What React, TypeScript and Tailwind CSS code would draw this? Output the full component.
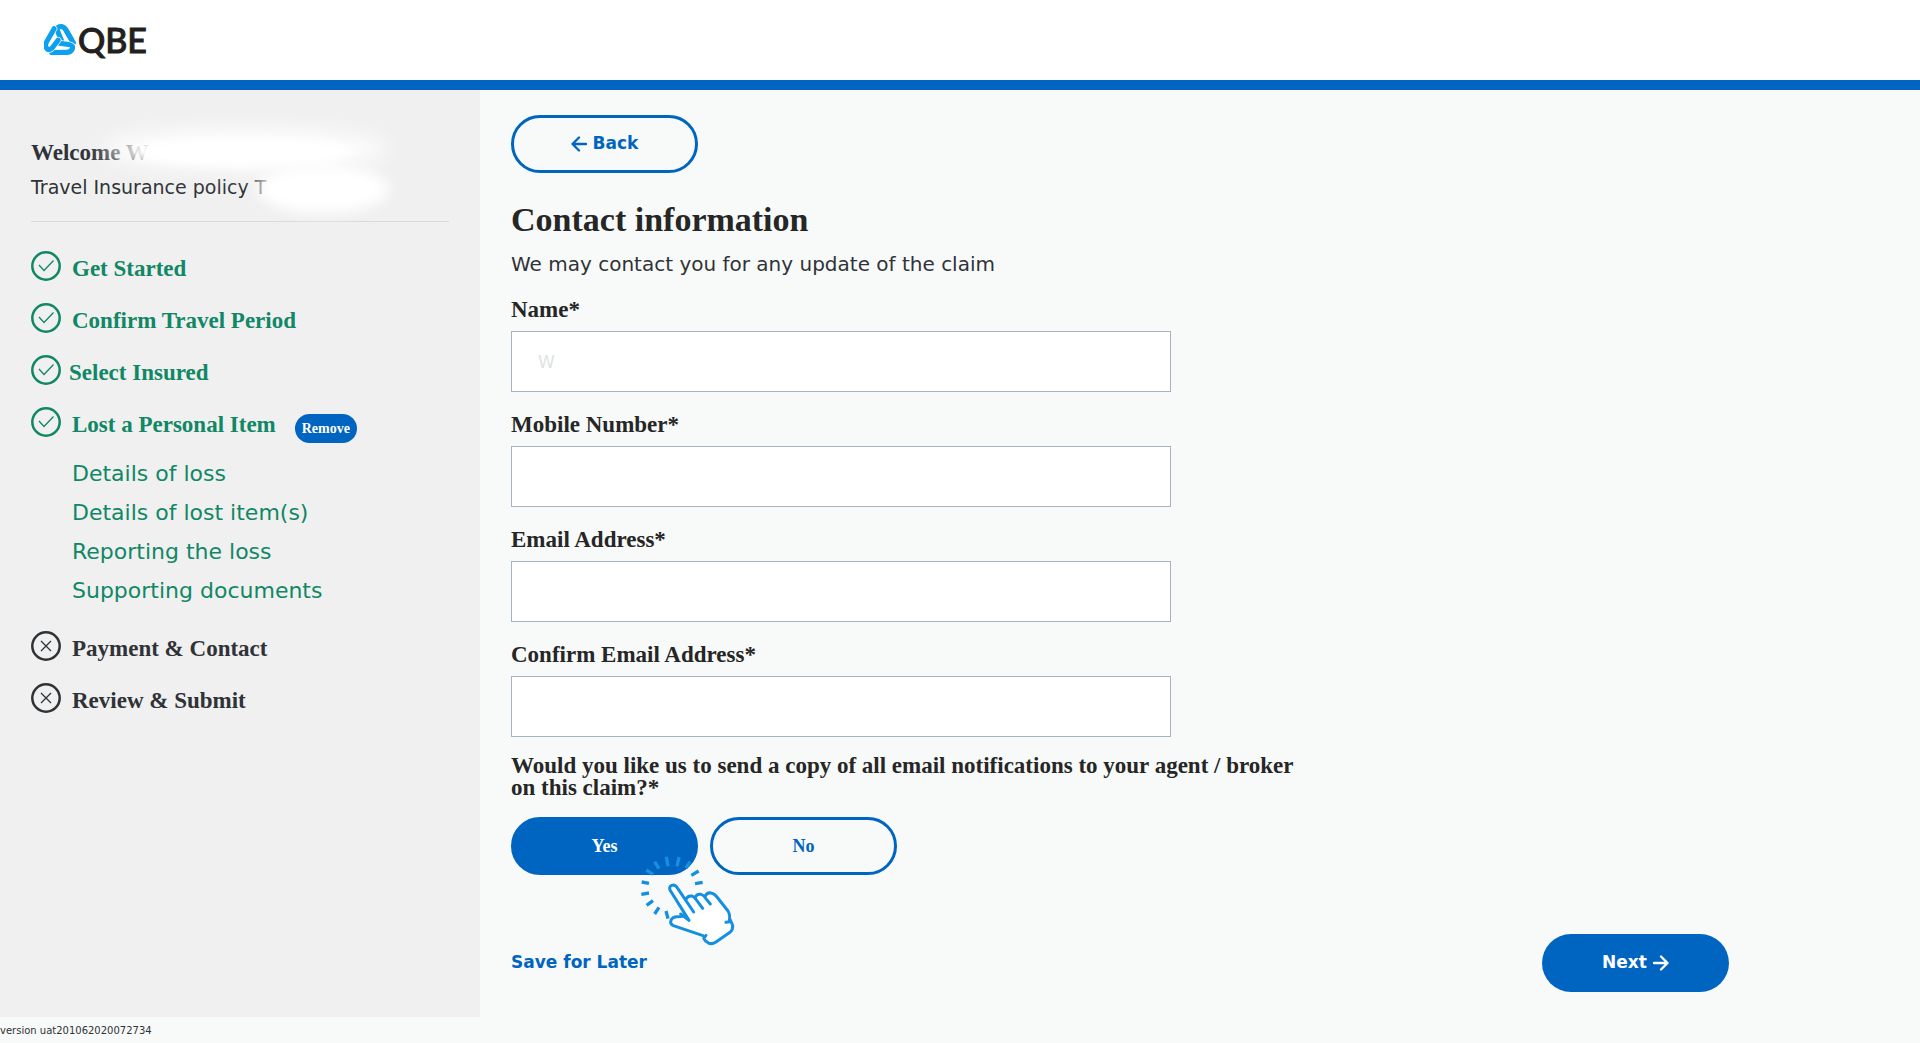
import { useState } from "react"
import clsx from "clsx"

const SERIF = "font-['Liberation_Serif',serif] font-bold"

const STEPS_DONE = [
  { label: "Get Started", gap: "gap-[11px]" },
  { label: "Confirm Travel Period", gap: "gap-[11px]" },
  { label: "Select Insured", gap: "gap-2" },
  { label: "Lost a Personal Item", gap: "gap-[11px]", removable: true },
]

const SUB_STEPS = ["Details of loss", "Details of lost item(s)", "Reporting the loss", "Supporting documents"]

const STEPS_OPEN = ["Payment & Contact", "Review & Submit"]

const FIELDS = [
  { id: "name", label: "Name*", type: "text" },
  { id: "mobile", label: "Mobile Number*", type: "tel" },
  { id: "email", label: "Email Address*", type: "email" },
  { id: "confirmEmail", label: "Confirm Email Address*", type: "email" },
]

// one strand of the knot, drawn three times around the centre
const STRAND = "M5 -2 L-5 -26 Q-10 -41 3 -41 Q12 -41 17 -32 L38 4"

function Logo() {
  return (
    <svg width="108" height="40" viewBox="0 0 108 40" role="img" aria-label="QBE">
      <g transform="translate(15.7 21.300) scale(0.36)" fill="none" strokeLinecap="round" strokeLinejoin="round">
        {[0, 120, 240].map(a => (
          <g key={a} transform={`rotate(${a})`}>
            <path d={STRAND} stroke="#ffffff" strokeWidth="18" />
            <path d={STRAND} stroke="#0d9ff0" strokeWidth="14" />
          </g>
        ))}
        <path d="M17 -32 L32 -6" stroke="#0d9ff0" strokeWidth="14" />
      </g>
      <text x="34" y="33" className="fill-[#231f20] stroke-[#231f20] stroke-1 font-['Lato',sans-serif] text-[34px] font-medium">QBE</text>
    </svg>
  )
}

function DoneIcon() {
  return (
    <svg width="30" height="30" viewBox="0 0 30 30" fill="none" stroke="currentColor" className="shrink-0">
      <circle cx="15" cy="15" r="13.7" strokeWidth="2.5" />
      <path d="M8 14 L13 19.500 L22.500 9.500" strokeWidth="1.300" />
    </svg>
  )
}

function OpenIcon() {
  return (
    <svg width="30" height="30" viewBox="0 0 30 30" fill="none" stroke="currentColor" className="shrink-0">
      <circle cx="15" cy="15" r="13.7" strokeWidth="2.5" />
      <path d="M10 10 L20 20 M20 10 L10 20" strokeWidth="1.300" />
    </svg>
  )
}

function Arrow({ left }: { left?: boolean }) {
  return (
    <svg width="16" height="16" viewBox="0 0 16 16" fill="none" stroke="currentColor" strokeWidth="2.300" strokeLinecap="round" strokeLinejoin="round">
      <path d={left ? "M15 8 H1.500 M8 1.500 L1.500 8 L8 14.500" : "M1 8 H14.500 M8 1.500 L14.500 8 L8 14.500"} />
    </svg>
  )
}

// hand with click rays, sits over the Yes button
function TapHand() {
  return (
    <svg width="105" height="100" viewBox="45 30 315 300" fill="none" stroke="#1590e0" strokeLinecap="round" strokeLinejoin="round" className="pointer-events-none absolute top-[33px] left-[124px]">
      <path
        d="M207 240 L150 148 Q146 136 160 135 Q167 135 173 145 L198 178 Q203 166 216 168 L226 172 Q230 160 244 162 L256 168 Q262 155 277 160 Q285 163 291 171 L324 213 Q331 223 330 239 L338 256 Q339 268 331 276 L289 305 Q274 315 264 308 L251 296 L249 286 L160 257 Q149 252 153 241 Q157 229 174 230 L188 229 Z"
        fill="#ffffff"
        stroke="none"
      />
      <path
        d="M207 241 L150 150 Q146 136 160 135 Q167 135 173 145 L221 216 M198 178 Q203 166 216 168 Q223 170 228 178 L248 205 M226 172 Q230 161 243 163 Q251 165 257 175 L271 192 M256 168 Q262 155 277 160 Q285 163 291 171 L324 213 Q331 223 328 245 L318 247 M330 238 L338 256 Q339 268 331 276 L289 305 Q274 315 264 308 Q254 303 251 295 L258 286 M249 287 L160 257 Q149 252 153 241 Q157 229 174 230 L187 229 M182 222 L207 241"
        strokeWidth="9"
      />
      <path d="M214 106 L236 93 M225 131 L248 127 M198 84 L210 65 M171 79 L177 51 M144 79 L139 50 M117 86 L104 65 M99 103 L79 90 M87 130 L65 126 M87 159 L64 163 M99 182 L80 196 M117 202 L104 222 M138 213 L144 236" strokeWidth="10" strokeLinecap="butt" />
    </svg>
  )
}

export default function App() {
  const [values, setValues] = useState<Record<string, string>>({ name: "W" })
  const [copyAgent, setCopyAgent] = useState(true)

  return (
    <div className="flex min-h-screen flex-col bg-[#f8faf9] font-['DejaVu_Sans',Verdana,sans-serif] text-[#2f3337]">
      <header className="border-b-[10px] border-[#0065c1] bg-white px-11 py-5">
        <a href="#" className="block w-fit"><Logo /></a>
      </header>

      <div className="flex flex-1">
        <aside className="w-1/4 bg-[#f0f0f0] px-[31px] pt-[45px]">
          <div className="relative border-b border-[#d9dbdb] pb-4">
            <h2 className={`${SERIF} text-[23px] leading-[35px]`}>Welcome W</h2>
            <p className="text-[19px] leading-[35px]">Travel Insurance policy T</p>
            <div className="absolute -top-2 left-[70px] h-11 w-72 rounded-[50%] bg-white/80 blur-[10px]" />
            <div className="absolute top-[3px] left-[100px] h-7 w-56 rounded-[50%] bg-white blur-[5px]" />
            <div className="absolute top-[30px] left-[226px] h-12 w-[132px] rounded-[50%] bg-white blur-[7px]" />
          </div>

          <ul className={`${SERIF} mt-[29px] flex flex-col gap-[22px] text-[23px] text-[#108765]`}>
            {STEPS_DONE.map(s => (
              <li key={s.label} className={clsx("flex h-[30px]", s.gap)}>
                <DoneIcon />
                <a href="#" className="leading-[35px]">{s.label}</a>
                {s.removable && (
                  <button className="mt-[7px] ml-2 h-[29px] w-[62px] rounded-full bg-[#0065c1] text-[14px] text-white">Remove</button>
                )}
              </li>
            ))}
          </ul>

          <ul className="mt-[17px] ml-[41px] text-[22px] leading-[39px] text-[#108765]">
            {SUB_STEPS.map(s => (
              <li key={s}><a href="#">{s}</a></li>
            ))}
          </ul>

          <ul className={`${SERIF} mt-[21px] flex flex-col gap-[22px] text-[23px]`}>
            {STEPS_OPEN.map(s => (
              <li key={s} className="flex h-[30px] gap-[11px]">
                <OpenIcon />
                <a href="#" className="leading-[35px]">{s}</a>
              </li>
            ))}
          </ul>
        </aside>

        <main className="flex-1 pt-[25px] pr-[191px] pl-[31px]">
          <button className="flex h-[58px] w-[187px] items-center justify-center gap-1.5 rounded-full border-3 border-[#0065c1] text-[17px] font-bold text-[#0065c1]">
            <Arrow left /> Back
          </button>

          <h1 className={`${SERIF} mt-[27px] text-[34px] leading-10 text-[#262626]`}>Contact information</h1>
          <p className="mt-2 text-[20px] leading-8">We may contact you for any update of the claim</p>

          <form className="mt-[19px]" onSubmit={e => e.preventDefault()}>
            <div className="flex max-w-[660px] flex-col gap-[22px]">
              {FIELDS.map(f => (
                <div key={f.id}>
                  <label htmlFor={f.id} className={`${SERIF} block text-[23px] leading-[22px] text-[#262626]`}>{f.label}</label>
                  <input
                    id={f.id}
                    type={f.type}
                    value={values[f.id] ?? ""}
                    onChange={e => setValues({ ...values, [f.id]: e.target.value })}
                    className="mt-2.5 block h-[61px] w-full border border-[#a5b3c3] bg-white px-[26px] text-[17px] text-[#dfe3e3] outline-none"
                  />
                </div>
              ))}
            </div>

            <fieldset className="mt-[18px]">
              <legend className={`${SERIF} max-w-[800px] text-[23px] leading-[22px] text-[#262626]`}>
                Would you like us to send a copy of all email notifications to your agent / broker on this claim?*
              </legend>
              <div className="relative mt-[18px] flex gap-3">
                {[true, false].map(v => (
                  <button
                    key={String(v)}
                    type="button"
                    aria-pressed={copyAgent === v}
                    onClick={() => setCopyAgent(v)}
                    className={clsx(
                      SERIF,
                      "h-[58px] w-[187px] rounded-full border-3 border-[#0065c1] text-[18px]",
                      copyAgent === v ? "bg-[#0065c1] text-white" : "text-[#0065c1]"
                    )}
                  >
                    {v ? "Yes" : "No"}
                  </button>
                ))}
                <TapHand />
              </div>
            </fieldset>

            <div className="mt-[59px] flex items-center justify-between">
              <a href="#" className="text-[17px] font-bold text-[#0065c1]">Save for Later</a>
              <button type="submit" className="flex h-[58px] w-[187px] items-center justify-center gap-1.5 rounded-full bg-[#0065c1] text-[17px] font-bold text-white">
                Next <Arrow />
              </button>
            </div>
          </form>
        </main>
      </div>

      <footer className="h-[26px] text-[10px] leading-7">version uat201062020072734</footer>
    </div>
  )
}
